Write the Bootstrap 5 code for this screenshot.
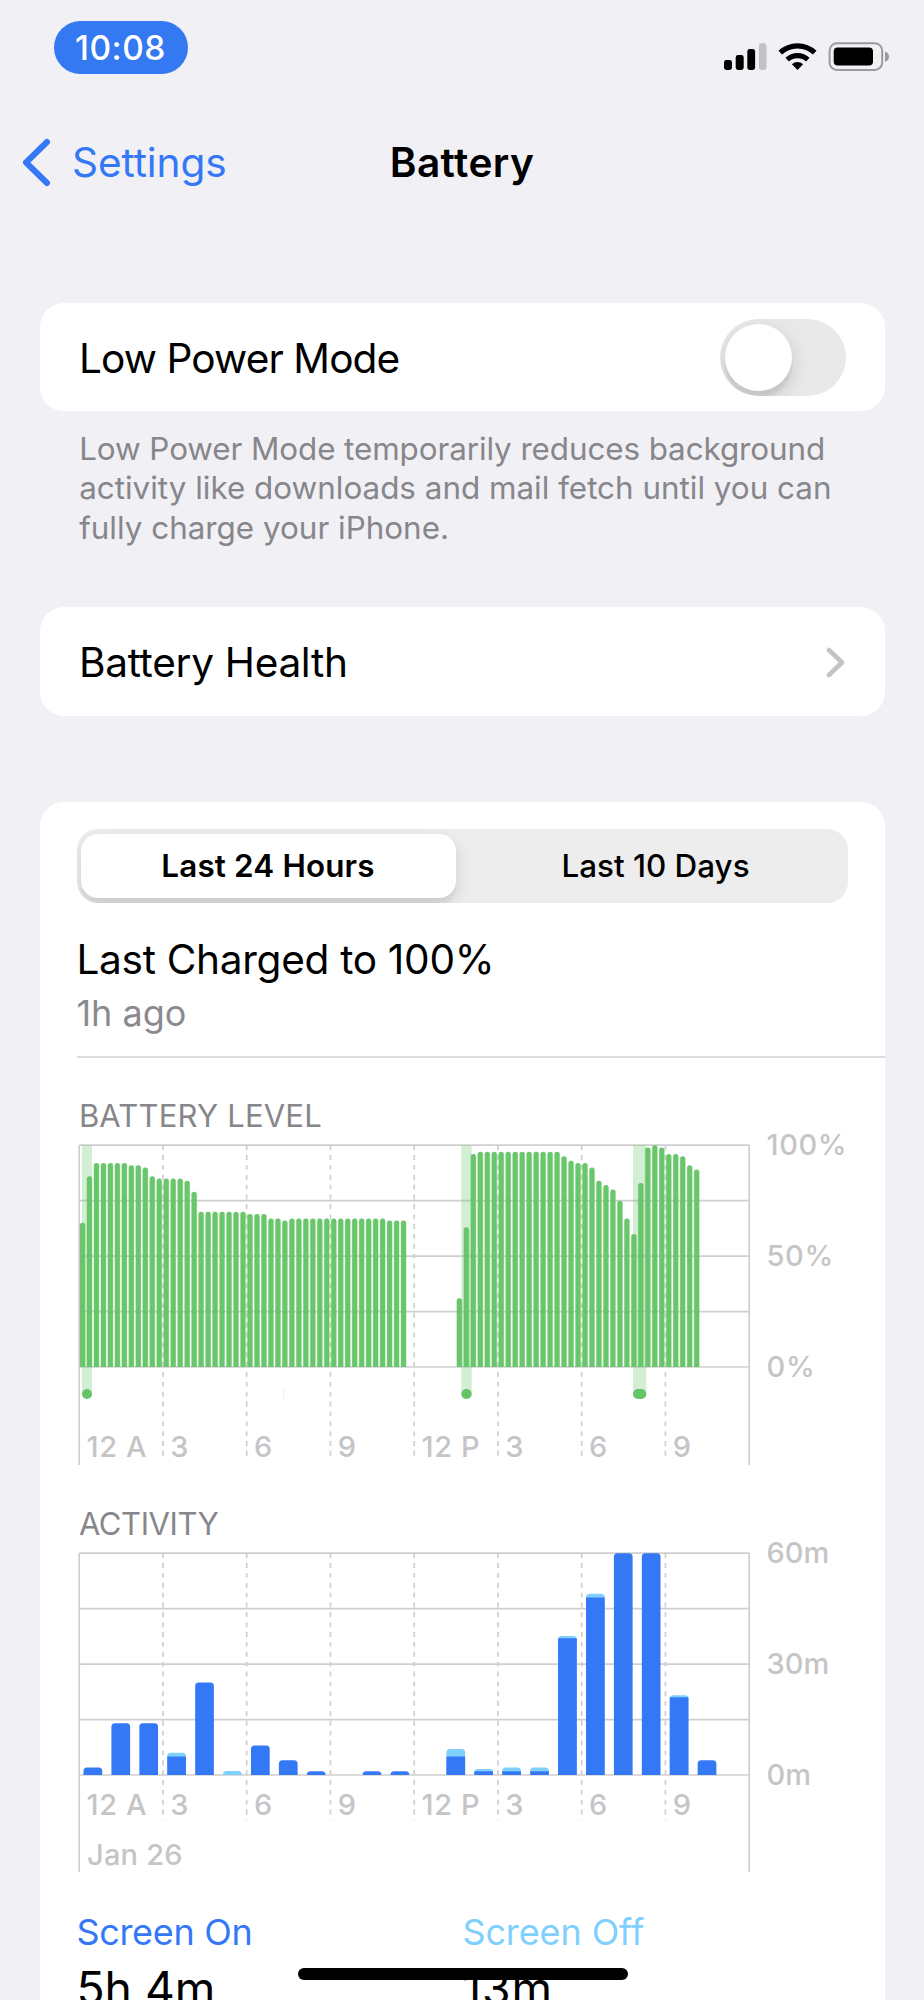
<!DOCTYPE html>
<html lang="en">
<head>
<meta charset="utf-8">
<meta name="viewport" content="width=device-width, initial-scale=1">
<title>Battery</title>
<link rel="stylesheet" href="https://cdn.jsdelivr.net/npm/bootstrap@5.3.0/dist/css/bootstrap.min.css">
<style>
  body{font-family:Inter,"Liberation Sans",sans-serif;background:#f1f0f5;color:#000;}
  .screen{width:924px;height:2000px;overflow:hidden;}
  .status-row{height:96px;padding:21px 35px 0 53.5px;}
  .time-pill{width:134px;height:53px;border-radius:27px;background:#3478f2;color:#fff;font-size:33.5px;font-weight:500;line-height:54px;letter-spacing:.5px;}
  .nav-row{height:133px;font-size:40.6px;line-height:50px;}
  .nav-row>*{flex:1 1 0;}
  .ios-blue{color:#3478f6;}
  .panel{width:845px;margin-left:39.5px;background:#fff;border-radius:24px;}
  .cell{height:108.3px;padding:3px 39px 0 39.4px;font-size:40.6px;line-height:50px;}
  .switch{width:125.5px;height:76.5px;border-radius:39px;background:#e9e9ea;padding:5px;overflow:hidden;margin-top:-2px;}
  .knob{width:67px;height:67px;border-radius:50%;background:#fff;box-shadow:0 7px 20px rgba(0,0,0,.15),0 7px 3px rgba(0,0,0,.06);}
  .footnote{margin:18.7px 0 0 79.2px;font-size:31.4px;line-height:39.3px;color:#86868b;height:118px;}
  .segments{height:74px;margin:0 37px;border-radius:21px;background:#ededee;padding:5px 4px;overflow:hidden;font-size:31.4px;line-height:65px;}
  .segments>*{flex:0 0 375px;text-align:center;}
  .segments>:last-child{flex:1;font-weight:500;padding-left:12px;}
  .picked{background:#fff;border-radius:17px;font-weight:600;letter-spacing:.15px;box-shadow:0 7px 18px rgba(0,0,0,.12),0 7px 3px rgba(0,0,0,.04);}
  .inset{padding-left:36.9px;}
  .charged{font-size:40.6px;line-height:50px;margin-top:32px;letter-spacing:-.3px;}
  .ago{font-size:36px;line-height:44px;margin-top:6px;color:#8a8a8e;}
  .rule{height:2px;background:#dcdcde;margin:21px 0 0 37px;}
  .head{font-size:31px;line-height:36px;color:#86868b;padding-left:39.4px;}
  .totals{font-size:36px;line-height:44px;padding-top:30px;}
  .totals>*{flex:0 0 386px;}
  .sky{color:#7fd0fc;}
  .amount{font-size:46.3px;line-height:60px;color:#000;margin-top:4px;}
  .home-bar{left:297.5px;top:1968px;width:330px;height:12px;border-radius:6px;background:#000;}
  svg{display:block;}
  svg text{font-weight:500;font-size:29px;fill:#c5c5c7;}
</style>
</head>
<body>
<div class="screen position-relative">
  <div class="status-row d-flex justify-content-between">
    <div class="time-pill text-center">10:08</div>
    <svg width="165" height="30" viewBox="724 42 165 30" style="margin-top:21px">
      <rect x="724" y="60" width="8" height="10" rx="2.4"/><rect x="735.7" y="55" width="8" height="15" rx="2.4"/><rect x="747.3" y="49" width="7.8" height="21" rx="2.4"/><rect x="759" y="43.3" width="7.5" height="26.7" rx="2.4" fill="#c1c1c6"/>
      <g fill="none" stroke="#000" stroke-width="5.2"><path d="M780.3 52.7a25 25 0 0 1 34.4 0"/><path d="M787.2 59.7a15.2 15.2 0 0 1 20.6 0"/></g>
      <path d="M797.5 70l-5.6-5.8a8.2 8.2 0 0 1 11.2 0z"/>
      <rect x="829.6" y="43.2" width="52.6" height="26.7" rx="7.5" fill="none" stroke="#9a9a9d" stroke-width="2"/>
      <rect x="833.7" y="47.6" width="39.3" height="18" rx="4"/>
      <path d="M885 51.5q4 1.4 4 5.2t-4 5.2z" fill="#9a9a9d"/>
    </svg>
  </div>
  <div class="nav-row d-flex align-items-center">
    <div class="ios-blue d-flex align-items-center"><svg width="72" height="54"><path d="M47 6L26 26.5 47 47" fill="none" stroke="#3478f6" stroke-width="6" stroke-linecap="round" stroke-linejoin="round"/></svg><span style="letter-spacing:-.1px">Settings</span></div>
    <div class="text-center fw-semibold" style="letter-spacing:.4px">Battery</div>
    <div></div>
  </div>

  <div class="panel cell d-flex align-items-center justify-content-between" style="margin-top:74px">
    <span style="letter-spacing:-.88px">Low Power Mode</span>
    <div class="switch"><div class="knob"></div></div>
  </div>
  <div class="footnote"><span style="letter-spacing:-.09px">Low Power Mode temporarily reduces background</span><br>activity like downloads and mail fetch until you can<br>fully charge your iPhone.</div>

  <div class="panel cell d-flex align-items-center justify-content-between" style="margin-top:59.3px">
    <span style="letter-spacing:-.3px">Battery Health</span>
    <svg width="20" height="34"><path d="M3 4L16 16.5 3 29" fill="none" stroke="#c4c4c6" stroke-width="4.6" stroke-linecap="round" stroke-linejoin="round"/></svg>
  </div>

  <div class="panel" style="margin-top:86.4px;padding-top:27px;height:1260px">
    <div class="segments d-flex"><div class="picked">Last 24 Hours</div><div>Last 10 Days</div></div>
    <div class="charged inset">Last Charged to 100%</div>
    <div class="ago inset">1h ago</div>
    <div class="rule"></div>
    <div class="head" style="margin-top:39.7px;letter-spacing:.2px">BATTERY LEVEL</div>
    <svg id="level" width="845" height="340"></svg>
    <div class="head" style="margin-top:32.5px;letter-spacing:-.4px">ACTIVITY</div>
    <svg id="activity" width="845" height="338"></svg>
    <div class="totals inset d-flex">
      <div class="ios-blue" style="letter-spacing:-.3px">Screen On<div class="amount" style="letter-spacing:0">5h 4m</div></div>
      <div class="sky" style="letter-spacing:-.1px">Screen Off<div class="amount" style="letter-spacing:.8px">13m</div></div>
    </div>
  </div>
  <div class="home-bar position-absolute"></div>
</div>
<script>
  const X0 = 39.2, W = 670, TOP = 11.2, H = 221.8, BASE = TOP + H;
  const line = '#cfcfd1';
  function frame(bottom, dashBottom, labelY, yLabels) {
    let s = '';
    for (let k = 0; k < 5; k++) s += `<path d="M${X0} ${TOP + H * k / 4}h${W}" stroke="${line}" stroke-width="1.7"/>`;
    s += `<path d="M${X0} ${TOP}V${bottom}M${X0 + W} ${TOP}V${bottom}" stroke="${line}" stroke-width="1.7"/>`;
    for (let k = 1; k < 8; k++) s += `<path d="M${X0 + W * k / 8} ${TOP}V${dashBottom}" stroke="${line}" stroke-width="1.7" stroke-dasharray="4.93 4.93"/>`;
    ['12 A', '3', '6', '9', '12 P', '3', '6', '9'].forEach((t, k) => s += `<text x="${X0 + W * k / 8 + 7.3}" y="${labelY}" ${t[1] ? 'letter-spacing=".6"' : ''}>${t}</text>`);
    yLabels.forEach((t, k) => s += `<text x="726.6" y="${TOP + H * k / 2 + 10}" ${t.endsWith('%') ? 'letter-spacing=".6"' : ''}>${t}</text>`);
    return s;
  }
  const R = (v, n) => Array(n).fill(v);
  const level = [65, 86, ...R(92, 5), 91, 91, 90, 86, ...R(85, 4), 84, 79, ...R(70, 7), 69, 69, 69, 67, 67, 66, ...R(67, 14), 66, 66, 66,
    ...R(0, 7), 31, 63, 96, ...R(97, 12), 95, 93, 92, 92, 90, 84, 82, 80, 75, 67, 60, 83, 99, 100, 99, 96, 96, 95, 91, 89];
  let s = frame(331, 326.7, 323, ['100%', '50%', '0%']);
  [[42, 10], [421.3, 10.4], [593, 13.3]].forEach(([x, w]) => {
    s += `<path d="M${x} ${TOP}h${w}V260h${-w}z" fill="#65c466" fill-opacity=".29"/><rect x="${x}" y="255" width="${w}" height="10" rx="5" fill="#65c466"/>`;
  });
  s += '<path d="M243.7 255v10" stroke="#65c466" stroke-opacity=".35" stroke-width=".6"/>';
  level.forEach((v, i) => {
    if (!v) return;
    const c = X0 + 3.3 + i * W / 96, y = BASE - H * v / 100;
    s += `<path d="M${c - 3.1} ${BASE}V${y + 3}a3.1 3 0 0 1 6.2 0V${BASE}z" fill="#65c466" fill-opacity=".29"/>`;
    s += `<path d="M${c - 2.5} ${BASE}V${y + 2.5}a2.5 2.5 0 0 1 5 0V${BASE}z" fill="#65c466" fill-opacity=".96"/>`;
  });
  document.getElementById('level').innerHTML = s;

  const act = [[2, 2], [14, 14], [14, 14], [5, 6], [25, 25], [0, 1.1], [8, 8], [4, 4], [1, 1], [0, 0], [1, 1], [1, 1], [0, 0], [5, 7], [1, 1.6], [1, 2], [1, 2], [37, 37.6], [48, 49], [60, 60], [60, 60], [21, 21.6], [4, 4]];
  s = frame(330, 278, 273, ['60m', '30m', '0m']) + '<text x="47" y="322.5" letter-spacing=".2">Jan 26</text>';
  act.forEach(([on, all], i) => {
    if (!all) return;
    const x = X0 + 4.3 + i * W / 24, h = all * H / 60, r = Math.min(3.5, h), cap = `V${BASE - h + r}q0 ${-r} ${r} ${-r}h${18.7 - 2 * r}q${r} 0 ${r} ${r}V${BASE}z`;
    s += `<path d="M${x} ${BASE}${cap}" fill="${on === all ? '#3478f6' : '#7fd0fc'}"/>`;
    if (on && on !== all) s += `<path d="M${x} ${BASE}v${-on * H / 60}h18.7V${BASE}z" fill="#3478f6"/>`;
  });
  document.getElementById('activity').innerHTML = s;
</script>
<script src="https://cdn.jsdelivr.net/npm/bootstrap@5.3.0/dist/js/bootstrap.bundle.min.js"></script>
</body>
</html>
